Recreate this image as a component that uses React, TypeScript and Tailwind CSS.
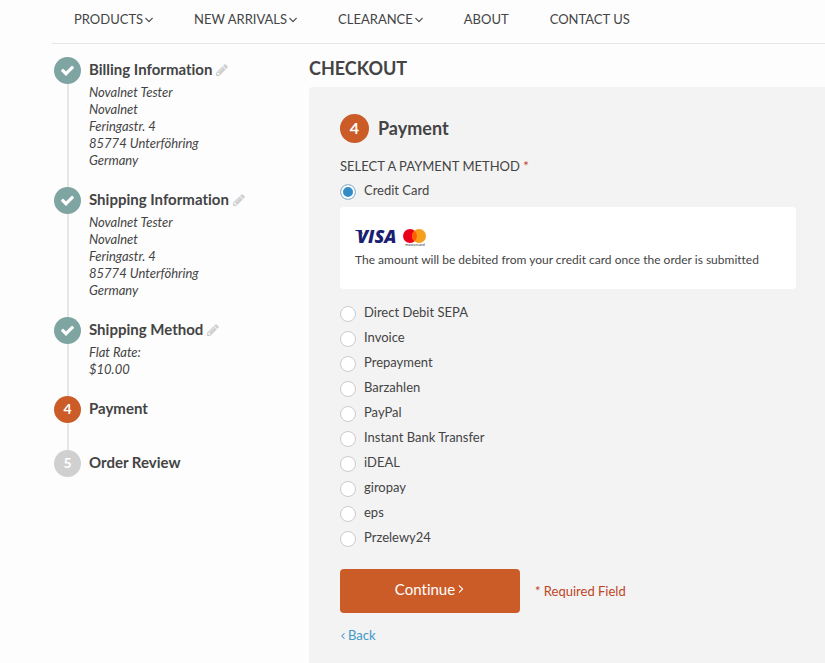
import React, { useState } from 'react';

interface Step {
  title: string;
  details?: string[];
  number?: number;
}

const NAV = [
  { label: 'PRODUCTS', menu: true },
  { label: 'NEW ARRIVALS', menu: true },
  { label: 'CLEARANCE', menu: true },
  { label: 'ABOUT', menu: false },
  { label: 'CONTACT US', menu: false },
];

const ADDRESS = ['Novalnet Tester', 'Novalnet', 'Feringastr. 4', '85774 Unterföhring', 'Germany'];

const STEPS: Step[] = [
  { title: 'Billing Information', details: ADDRESS },
  { title: 'Shipping Information', details: ADDRESS },
  { title: 'Shipping Method', details: ['Flat Rate:', '$10.00'] },
  { title: 'Payment', number: 4 },
  { title: 'Order Review', number: 5 },
];

const METHODS = [
  'Direct Debit SEPA',
  'Invoice',
  'Prepayment',
  'Barzahlen',
  'PayPal',
  'Instant Bank Transfer',
  'iDEAL',
  'giropay',
  'eps',
  'Przelewy24',
];

const AngleIcon = ({ className }: { className?: string }) => (
  <svg viewBox="387 576 1018 740" fill="currentColor" className={className} aria-hidden="true">
    <path d="M1395 736q0 13-10 23l-466 466q-10 10-23 10t-23-10l-466-466q-10-10-10-23t10-23l50-50q10-10 23-10t23 10l393 393 393-393q10-10 23-10t23 10l50 50q10 10 10 23z" />
  </svg>
);

const CheckIcon = () => (
  <svg viewBox="0 0 1792 1792" fill="currentColor" className="w-[15px] h-[15px]" aria-hidden="true">
    <path d="M1671 566q0 40-28 68l-724 724-136 136q-28 28-68 28t-68-28l-136-136-362-362q-28-28-28-68t28-68l136-136q28-28 68-28t68 28l294 295 656-657q28-28 68-28t68 28l136 136q28 28 28 68z" />
  </svg>
);

const PencilIcon = () => (
  <svg viewBox="128 128 1536 1536" fill="currentColor" className="w-3 h-3" aria-hidden="true">
    <path d="M491 1536l91-91-235-235-91 91v107h128v128h107zm523-928q0-22-22-22-10 0-17 7l-542 542q-7 7-7 17 0 22 22 22 10 0 17-7l542-542q7-7 7-17zm-54-192l416 416-832 832h-416v-416zm683 96q0 53-37 90l-166 166-416-416 166-165q36-38 90-38 53 0 91 38l235 234q37 39 37 91z" />
  </svg>
);

const CardLogos = () => (
  <svg width="74" height="22" viewBox="0 0 74 22" className="overflow-visible" role="img" aria-label="Visa, Mastercard">
    <text x="2" y="18" fontSize="18" fontWeight="800" fontStyle="italic" fill="#1a1f71" fontFamily="'Open Sans', sans-serif">
      VISA
    </text>
    <path d="M0 5h6l2 4q-3-3-8-3.600z" fill="#1a1f71" />
    <circle cx="55" cy="11" r="7" fill="#eb001b" />
    <circle cx="64" cy="11" r="7" fill="#f79e1b" />
    <path d="M59.500 5.640a7 7 0 0 1 0 10.720a7 7 0 0 1 0-10.720z" fill="#ff5f00" />
    <text x="60" y="21" fontSize="4" textAnchor="middle" fill="#333" fontFamily="Lato, sans-serif">
      mastercard
    </text>
  </svg>
);

interface MethodProps {
  label: string;
  selected: string;
  onSelect: (label: string) => void;
}

const Method: React.FC<MethodProps> = ({ label, selected, onSelect }) => (
  <label className="flex h-[25px] items-center gap-2 cursor-pointer">
    <input
      type="radio"
      name="payment"
      checked={selected === label}
      onChange={() => onSelect(label)}
      className="mt-0.5 w-4 h-4 appearance-none rounded-full border border-[#ccc] bg-white checked:border-[#a9bfcc] checked:bg-[#328dc7] checked:shadow-[inset_0_0_0_2px_white]"
    />
    <span>{label}</span>
  </label>
);

export default function App() {
  const [selected, setSelected] = useState('Credit Card');

  return (
    <div className="min-h-screen flex flex-col bg-[#fdfdfd] pl-[52px] font-[Lato,sans-serif] text-[13px] leading-[17px] text-[#444] [font-variant-ligatures:none]">
      <nav className="flex h-11 items-start gap-[41px] border-b border-[#e6e6e6] pl-[22px] pt-[11px]">
        {NAV.map((item) => (
          <a key={item.label} href="#" className="flex items-center gap-0.5 whitespace-nowrap">
            {item.label}
            {item.menu && <AngleIcon className="w-2 h-2" />}
          </a>
        ))}
      </nav>

      <div className="flex flex-1">
        {/* Progress */}
        <ol className="w-[257px] shrink-0 pl-0.5 pt-[13px]">
          {STEPS.map((step, i) => (
            <li key={step.title} className="flex gap-2">
              <div className="flex flex-col items-center">
                <div
                  className={`flex w-[27px] h-[27px] shrink-0 items-center justify-center rounded-full pb-px text-sm font-bold text-white ${
                    !step.number ? 'bg-[#7fa5a3]' : step.number === 4 ? 'bg-[#cb5c28]' : 'bg-[#d0d0d0]'
                  }`}
                >
                  {step.number ?? <CheckIcon />}
                </div>
                {i < STEPS.length - 1 && <div className="w-0.5 flex-1 bg-[#e6e6e6]" />}
              </div>
              <div className={step.details ? 'pb-[18px]' : 'pb-[27px]'}>
                <div className="flex h-[27px] items-center gap-1 pb-0.5">
                  <h2 className="text-[15px] font-bold">{step.title}</h2>
                  {step.details && (
                    <button type="button" aria-label={`Edit ${step.title}`} className="text-[#d0d0d0]">
                      <PencilIcon />
                    </button>
                  )}
                </div>
                {step.details?.map((line) => (
                  <p key={line} className="italic">{line}</p>
                ))}
              </div>
            </li>
          ))}
        </ol>

        <main className="flex flex-1 flex-col pt-3">
          <h1 className="text-lg leading-6 font-bold">CHECKOUT</h1>
          <form
            onSubmit={(e) => e.preventDefault()}
            className="mt-[7px] flex-1 rounded-tl bg-[#f3f3f3] pt-[27px] pl-[31px] pr-[29px] pb-4"
          >
            <div className="flex items-center gap-[9px]">
              <span className="flex w-[29px] h-[29px] items-center justify-center rounded-full bg-[#cb5c28] pb-0.5 text-base font-bold text-white">4</span>
              <h2 className="pb-0.5 text-lg leading-5 font-bold">Payment</h2>
            </div>

            <fieldset className="mt-[15px]">
              <legend>
                SELECT A PAYMENT METHOD <span className="text-[#c0392b]">*</span>
              </legend>
              <div className="pt-[3px]">
                <Method label="Credit Card" selected={selected} onSelect={setSelected} />
              </div>
              <div className="mt-1 mb-[11px] min-h-[82px] rounded bg-white px-[15px] pt-[18px]">
                <CardLogos />
                <p className="mt-1 text-xs leading-[17px]">The amount will be debited from your credit card once the order is submitted</p>
              </div>
              {METHODS.map((label) => (
                <Method key={label} label={label} selected={selected} onSelect={setSelected} />
              ))}
            </fieldset>

            <div className="mt-[19px] flex items-center gap-[15px]">
              <button type="submit" className="flex w-[180px] h-11 items-center justify-center gap-0.5 rounded bg-[#cb5c28] pb-1 text-[15px] text-white">
                Continue
                <AngleIcon className="w-2 h-2 -rotate-90" />
              </button>
              <span className="text-[#bf4327]">* Required Field</span>
            </div>
            <a href="#" className="mt-3.5 inline-flex items-center gap-0.5 text-[#4198c9]">
              <AngleIcon className="w-1.5 h-2 rotate-90" />
              Back
            </a>
          </form>
        </main>
      </div>
    </div>
  );
}
